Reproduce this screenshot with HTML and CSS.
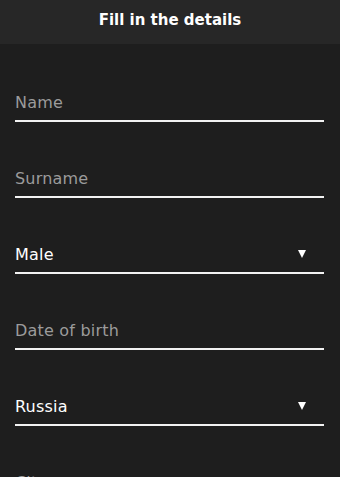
FILE: index.html
```html
<!DOCTYPE html>
<html lang="en">
<head>
    <meta charset="UTF-8">
    <meta name="viewport" content="width=device-width, initial-scale=1.0">
    <title>Fill in the details</title>
    <link rel="stylesheet" href="styles.css">
</head>
<body>
    <div class="header">Fill in the details</div>

    <form class="form">
        <div class="field">
            <input type="text" placeholder="Name">
        </div>
        <div class="field">
            <input type="text" placeholder="Surname">
        </div>
        <div class="field select">
            <span class="value">Male</span>
            <span class="arrow"></span>
        </div>
        <div class="field">
            <input type="text" placeholder="Date of birth">
        </div>
        <div class="field select">
            <span class="value">Russia</span>
            <span class="arrow"></span>
        </div>
        <div class="field">
            <input type="text" placeholder="City">
        </div>
    </form>
</body>
</html>
```

FILE: styles.css
```css
body {
    margin: 0;
    height: 100vh;
    background-color: #1e1e1e;
    font-family: "DejaVu Sans", "Open Sans", sans-serif;
    color: #fff;
    overflow: hidden;
}
.header {
    height: 44px;
    background-color: #272727;
    display: flex;
    align-items: center;
    justify-content: center;
    font-size: 15px;
    font-weight: bold;
    padding-bottom: 4px;
    box-sizing: border-box;
}
.form {
    padding: 2px 16px 0 15px;
}
.field {
    display: flex;
    align-items: center;
    height: 20px;
    margin-top: 46px;
    padding-bottom: 8px;
    border-bottom: 2px solid #f2f2f2;
}
.field input {
    width: 100%;
    border: none;
    outline: none;
    background: transparent;
    padding: 0;
    color: #fff;
    font-family: inherit;
    font-size: 16px;
    letter-spacing: 0.2px;
}
.field input::placeholder {
    color: #9b9b9b;
}
.value {
    flex: 1;
    font-size: 16px;
    letter-spacing: 0.2px;
}
.arrow {
    width: 0;
    height: 0;
    margin-right: 18px;
    border-left: 4.5px solid transparent;
    border-right: 4.5px solid transparent;
    border-top: 8px solid #fff;
}
```
